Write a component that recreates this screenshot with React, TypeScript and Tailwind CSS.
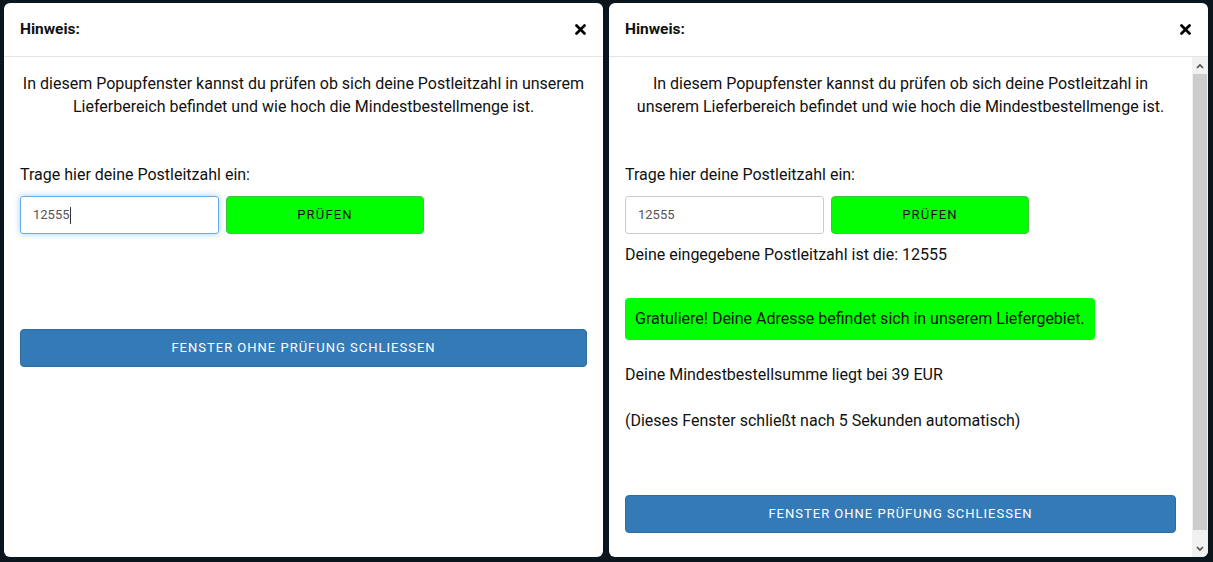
import React from "react";

function Header() {
  return (
    <div className="h-[54px] shrink-0 flex items-center justify-between px-4 border-b border-[#e5e5e5]">
      <span className="text-[15.5px] font-bold text-[#111]">Hinweis:</span>
      <svg width="11" height="11" viewBox="0 0 11 11" className="mr-[1px]">
        <path d="M1.5 1.5 L9.5 9.5 M9.5 1.5 L1.5 9.5" stroke="#000" strokeWidth="2.7" strokeLinecap="round" />
      </svg>
    </div>
  );
}

function PlzRow({ focused }: { focused?: boolean }) {
  return (
    <div className="flex gap-[7px] mt-[10px]">
      <div
        className={
          focused
            ? "w-[199px] h-[38px] flex items-center px-3 border border-[#66afe9] rounded-[3px] shadow-[0_0_6px_rgba(102,175,233,0.6)] text-[13px] text-[#555]"
            : "w-[199px] h-[38px] flex items-center px-3 border border-[#ccc] rounded-[3px] text-[13px] text-[#555]"
        }
      >
        12555
        {focused && <span className="w-px h-[17px] bg-[#333]" />}
      </div>
      <button className="w-[198px] h-[38px] bg-[#00ff00] border border-[#3ac73a] rounded-[4px] text-[13px] tracking-[1.2px] text-[#111]">
        PRÜFEN
      </button>
    </div>
  );
}

function CloseButton({ className }: { className: string }) {
  return (
    <button
      className={
        "w-full h-[38px] bg-[#337ab7] border border-[#2e6da4] rounded-[4px] text-white text-[13px] tracking-[1px] " +
        className
      }
    >
      FENSTER OHNE PRÜFUNG SCHLIESSEN
    </button>
  );
}

function Intro() {
  return (
    <p className="text-center text-[16px] leading-[23px]">
      In diesem Popupfenster kannst du prüfen ob sich deine Postleitzahl in unserem
      Lieferbereich befindet und wie hoch die Mindestbestellmenge ist.
    </p>
  );
}

function Scrollbar() {
  return (
    <div className="w-[16px] shrink-0 bg-[#f1f1f1] flex flex-col">
      <div className="h-[17px] flex items-center justify-center">
        <svg width="8" height="6" viewBox="0 0 8 6">
          <path d="M1 5 L4 2 L7 5" fill="none" stroke="#505050" strokeWidth="1.6" />
        </svg>
      </div>
      <div className="h-[456px] mx-[1px] bg-[#cdcdcd]" />
      <div className="flex-1" />
      <div className="h-[17px] flex items-center justify-center">
        <svg width="8" height="6" viewBox="0 0 8 6">
          <path d="M1 1 L4 4 L7 1" fill="none" stroke="#505050" strokeWidth="1.6" />
        </svg>
      </div>
    </div>
  );
}

export default function App() {
  return (
    <div
      className="w-[1213px] h-[562px] bg-[#0b151d] flex gap-[6px] pt-[3px] pl-[4px] text-[#111]"
      style={{ fontFamily: "Roboto, 'Noto Sans', sans-serif" }}
    >
      <div className="w-[599px] h-[554px] bg-white rounded-[6px] flex flex-col overflow-hidden">
        <Header />
        <div className="px-4 pt-[15px]">
          <Intro />
          <p className="mt-[45px] text-[16px] leading-[23px]">Trage hier deine Postleitzahl ein:</p>
          <PlzRow focused />
          <CloseButton className="mt-[95px]" />
        </div>
      </div>

      <div className="w-[599px] h-[554px] bg-white rounded-[6px] flex flex-col overflow-hidden">
        <Header />
        <div className="flex flex-1 min-h-0">
          <div className="flex-1 px-4 pt-[15px]">
            <Intro />
            <p className="mt-[45px] text-[16px] leading-[23px]">Trage hier deine Postleitzahl ein:</p>
            <PlzRow />
            <p className="mt-[9px] text-[16px] leading-[23px]">
              Deine eingegebene Postleitzahl ist die: 12555
            </p>
            <div className="mt-[32px] inline-flex items-center h-[42px] px-[10px] bg-[#00ff00] rounded-[4px] text-[16px]">
              Gratuliere! Deine Adresse befindet sich in unserem Liefergebiet.
            </div>
            <p className="mt-[23px] text-[16px] leading-[23px]">
              Deine Mindestbestellsumme liegt bei 39 EUR
            </p>
            <p className="mt-[23px] text-[16px] leading-[23px]">
              (Dieses Fenster schließt nach 5 Sekunden automatisch)
            </p>
            <CloseButton className="mt-[63px]" />
          </div>
          <Scrollbar />
        </div>
      </div>
    </div>
  );
}
